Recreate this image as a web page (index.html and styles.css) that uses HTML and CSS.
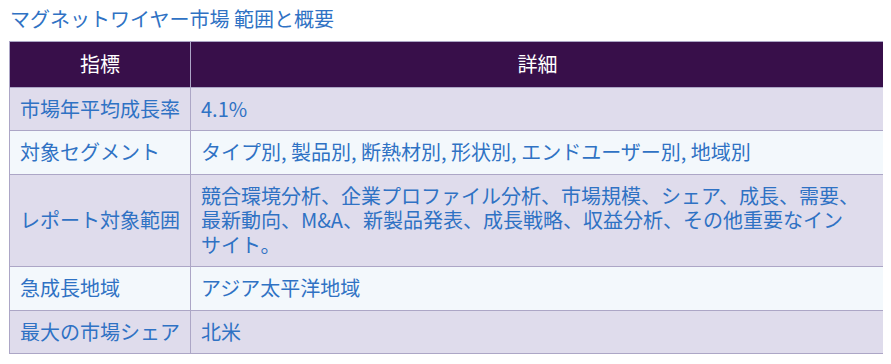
FILE: index.html
```html
<!DOCTYPE html>
<html lang="ja">
<head>
<meta charset="utf-8">
<title>マグネットワイヤー市場 範囲と概要</title>
<link rel="stylesheet" href="styles.css">
</head>
<body>
<h2 class="title">マグネットワイヤー市場 範囲と概要</h2>
<table class="summary">
  <thead>
    <tr><th class="col-key">指標</th><th>詳細</th></tr>
  </thead>
  <tbody>
    <tr class="odd"><td>市場年平均成長率</td><td class="detail">4.1%</td></tr>
    <tr class="even"><td>対象セグメント</td><td class="detail">タイプ別, 製品別, 断熱材別, 形状別, エンドユーザー別, 地域別</td></tr>
    <tr class="odd"><td>レポート対象範囲</td><td class="detail">競合環境分析、企業プロファイル分析、市場規模、シェア、成長、需要、最新動向、M&amp;A、新製品発表、成長戦略、収益分析、その他重要なインサイト。</td></tr>
    <tr class="even"><td>急成長地域</td><td class="detail">アジア太平洋地域</td></tr>
    <tr class="odd"><td>最大の市場シェア</td><td class="detail">北米</td></tr>
  </tbody>
</table>
</body>
</html>
```
FILE: styles.css
```css
body {
  margin: 8px;
  background: #ffffff;
  font-family: "Noto Sans CJK JP", "Noto Sans", sans-serif;
  color: #2f72c4;
}
.title {
  margin: 0 0 11px 2px;
  font-size: 20px;
  font-weight: normal;
  line-height: 22px;
  color: #2f72c4;
}
.summary {
  width: 876px;
  margin-left: 1px;
  border-collapse: collapse;
  font-size: 20px;
  line-height: 24.5px;
}
.summary th,
.summary td {
  border: 1px solid #aca6c6;
  padding: 9px 10px;
  text-align: left;
  vertical-align: middle;
  font-weight: normal;
}
.summary td.detail {
  padding-right: 24px;
}
.summary th {
  background: #380f4a;
  color: #ffffff;
  text-align: center;
  padding: 10px;
}
.summary .col-key {
  width: 160px;
}
.summary .odd td {
  background: #dfdcec;
}
.summary .even td {
  background: #f3f8fc;
}
```
